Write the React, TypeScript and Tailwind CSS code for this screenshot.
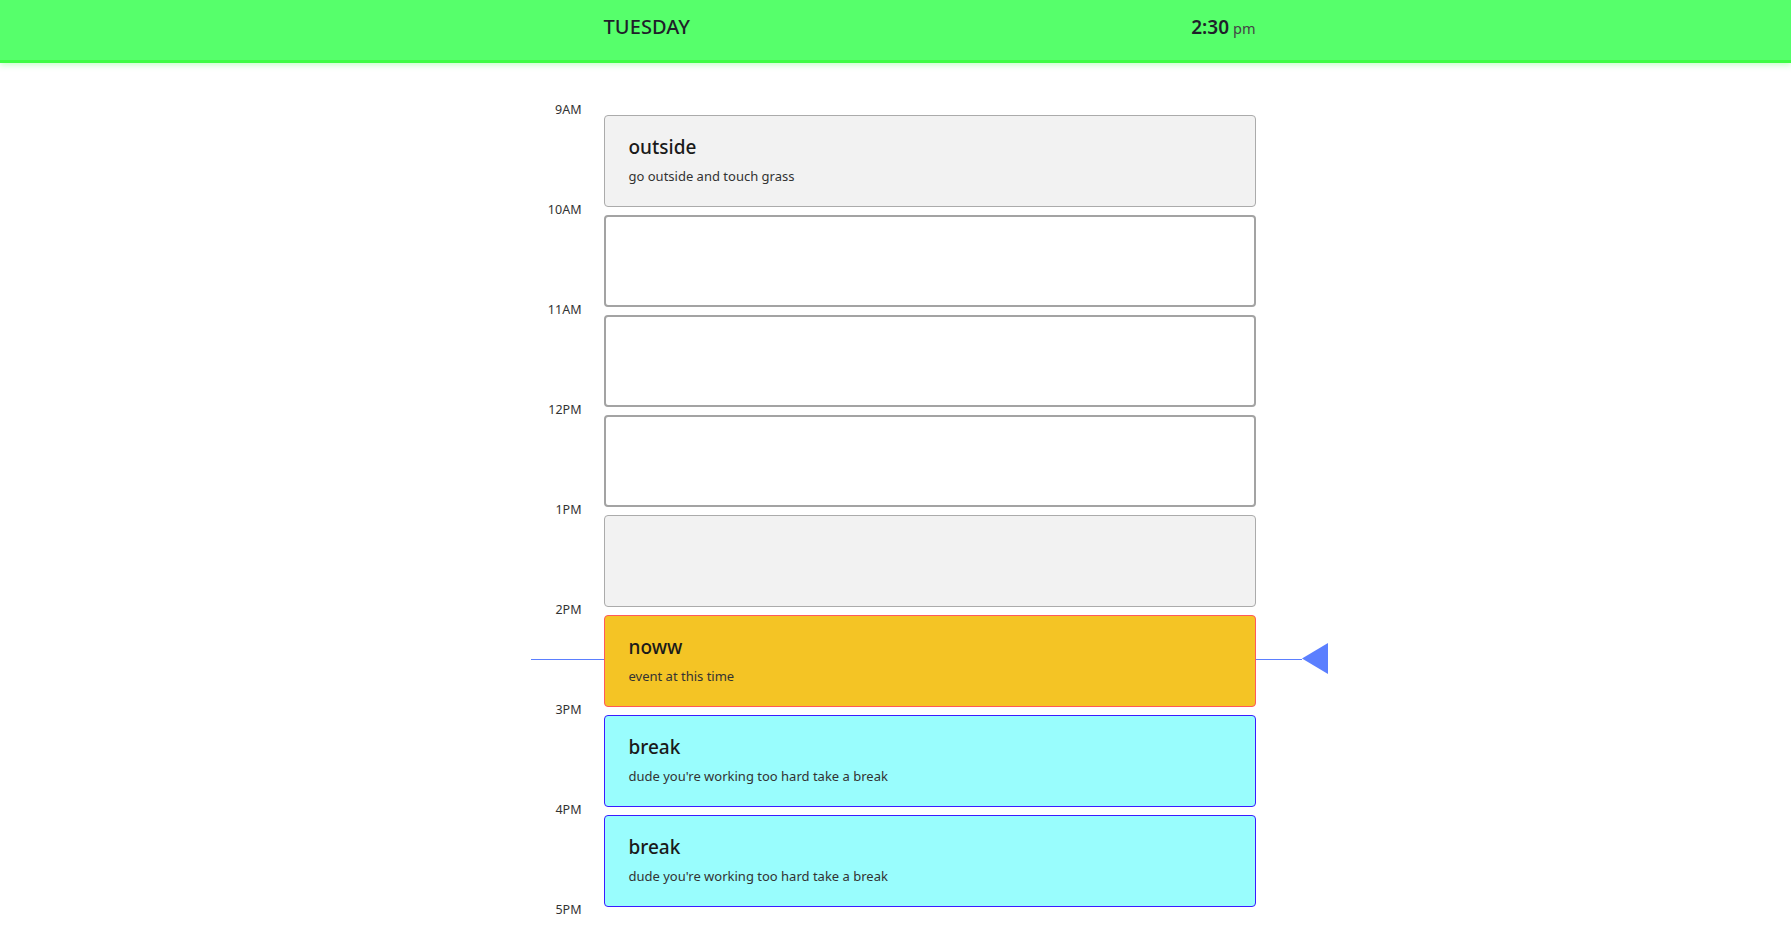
const hours = ["9AM", "10AM", "11AM", "12PM", "1PM", "2PM", "3PM", "4PM", "5PM"];

type Slot = {
  title?: string;
  desc?: string;
  kind: "past" | "empty" | "now" | "break";
};

const slots: Slot[] = [
  { kind: "past", title: "outside", desc: "go outside and touch grass" },
  { kind: "empty" },
  { kind: "empty" },
  { kind: "empty" },
  { kind: "past" },
  { kind: "now", title: "noww", desc: "event at this time" },
  { kind: "break", title: "break", desc: "dude you're working too hard take a break" },
  { kind: "break", title: "break", desc: "dude you're working too hard take a break" },
];

const cardStyles: Record<Slot["kind"], string> = {
  past: "bg-[#f2f2f2] border border-[#ababab]",
  empty: "bg-white border-2 border-[#a3a3a3]",
  now: "bg-[#f4c425] border border-[#ff5a5a]",
  break: "bg-[#99fdfd] border border-[#3a1cff]",
};

export default function App() {
  return (
    <div className="min-h-screen bg-white font-['Noto_Sans','Open_Sans',sans-serif] text-[#222]">
      {/* header */}
      <header className="h-[60px] bg-[#56ff6b] shadow-[0_3px_0_#3dfc44,0_5px_6px_rgba(80,255,90,0.35)]">
        <div className="mx-auto w-[730px] pl-[73px] pr-[5px] pt-[13px] flex items-baseline justify-between">
          <span className="text-[20px] leading-7 font-medium tracking-[0.1px] text-[#1f1f2a]">TUESDAY</span>
          <span className="leading-7">
            <span className="text-[19px] font-semibold text-[#1f1f2a]">2:30</span>
            <span className="ml-[4px] text-[14.5px] text-[#444]">pm</span>
          </span>
        </div>
      </header>

      {/* schedule */}
      <main className="relative mx-auto w-[730px] pt-[42px] flex">
        {/* current time marker */}
        <div className="absolute left-0 top-[584px] flex items-center">
          <div className="w-[771px] h-px bg-[#5b7fff]" />
          <svg width="27" height="31" viewBox="0 0 27 31" className="-mt-px">
            <polygon points="0,15.5 26,0 26,31" fill="#5b7fff" />
          </svg>
        </div>

        <div className="w-[51px] flex flex-col gap-[84px] text-right text-[12.5px] leading-4 text-[#333]">
          {hours.map((h) => (
            <span key={h}>{h}</span>
          ))}
        </div>

        <div className="ml-[22px] w-[652px] mt-[13px] flex flex-col gap-2">
          {slots.map((s, i) => (
            <div
              key={i}
              className={`relative h-[92px] rounded-[4px] pl-6 pt-[17px] ${cardStyles[s.kind]}`}
            >
              {s.title && (
                <div className="text-[19px] leading-7 font-medium text-[#1a1a1a]">{s.title}</div>
              )}
              {s.desc && (
                <div className="mt-[5px] text-[13px] leading-5 text-[#333]">{s.desc}</div>
              )}
            </div>
          ))}
        </div>
      </main>
    </div>
  );
}
